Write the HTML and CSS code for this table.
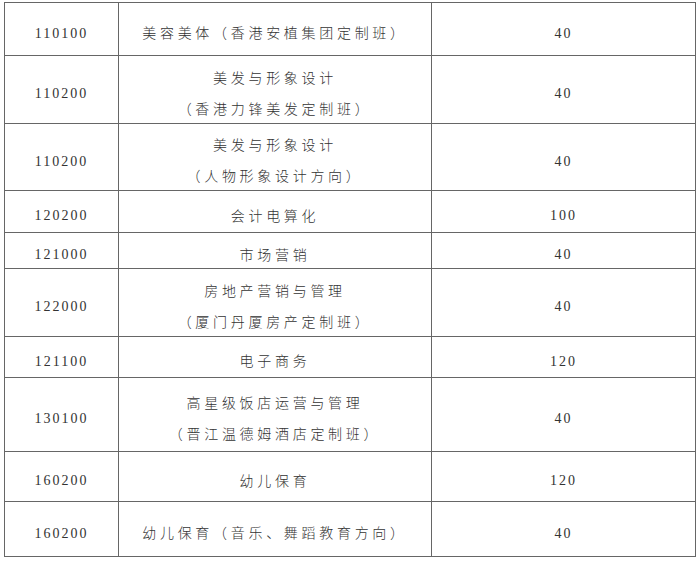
FILE: index.html
```html
<!DOCTYPE html>
<html lang="zh-CN">
<head>
<meta charset="utf-8">
<link rel="stylesheet" href="styles.css">
</head>
<body>
<div class="plan">
  <div class="cell code">110100</div><div class="cell name">美容美体（香港安植集团定制班）</div><div class="cell num">40</div>
  <div class="cell code">110200</div><div class="cell name two">美发与形象设计<br>（香港力锋美发定制班）</div><div class="cell num">40</div>
  <div class="cell code">110200</div><div class="cell name two">美发与形象设计<br>（人物形象设计方向）</div><div class="cell num">40</div>
  <div class="cell code">120200</div><div class="cell name">会计电算化</div><div class="cell num">100</div>
  <div class="cell code">121000</div><div class="cell name">市场营销</div><div class="cell num">40</div>
  <div class="cell code">122000</div><div class="cell name two">房地产营销与管理<br>（厦门丹厦房产定制班）</div><div class="cell num">40</div>
  <div class="cell code">121100</div><div class="cell name">电子商务</div><div class="cell num">120</div>
  <div class="cell code">130100</div><div class="cell name two">高星级饭店运营与管理<br>（晋江温德姆酒店定制班）</div><div class="cell num">40</div>
  <div class="cell code">160200</div><div class="cell name">幼儿保育</div><div class="cell num">120</div>
  <div class="cell code">160200</div><div class="cell name">幼儿保育（音乐、舞蹈教育方向）</div><div class="cell num">40</div>
</div>
</body>
</html>
```
FILE: styles.css
```css
html, body {
  margin: 0;
  padding: 0;
  background: #ffffff;
}
body {
  padding: 2px 0 0 4px;
}
.plan {
  display: grid;
  grid-template-columns: 113px 312px 263px;
  grid-template-rows: 52px 67px 66px 41px 35px 67px 40px 73px 49px 54px;
  gap: 1px;
  padding: 1px;
  width: 690px;
  background: #666666;
  color: #333333;
}
.cell {
  background: #ffffff;
  display: flex;
  flex-direction: column;
  align-items: center;
  justify-content: center;
  text-align: center;
  font-size: 14px;
  box-sizing: border-box;
}
.code, .num {
  font-family: "Liberation Serif", "Noto Sans CJK SC", serif;
  letter-spacing: 2px;
  padding-top: 9px;
}
.name {
  font-family: "Noto Sans CJK SC", "Liberation Serif", sans-serif;
  font-weight: 300;
  letter-spacing: 3.7px;
  line-height: 20px;
  padding-top: 6px;
}
.name.two {
  line-height: 31px;
}
```
